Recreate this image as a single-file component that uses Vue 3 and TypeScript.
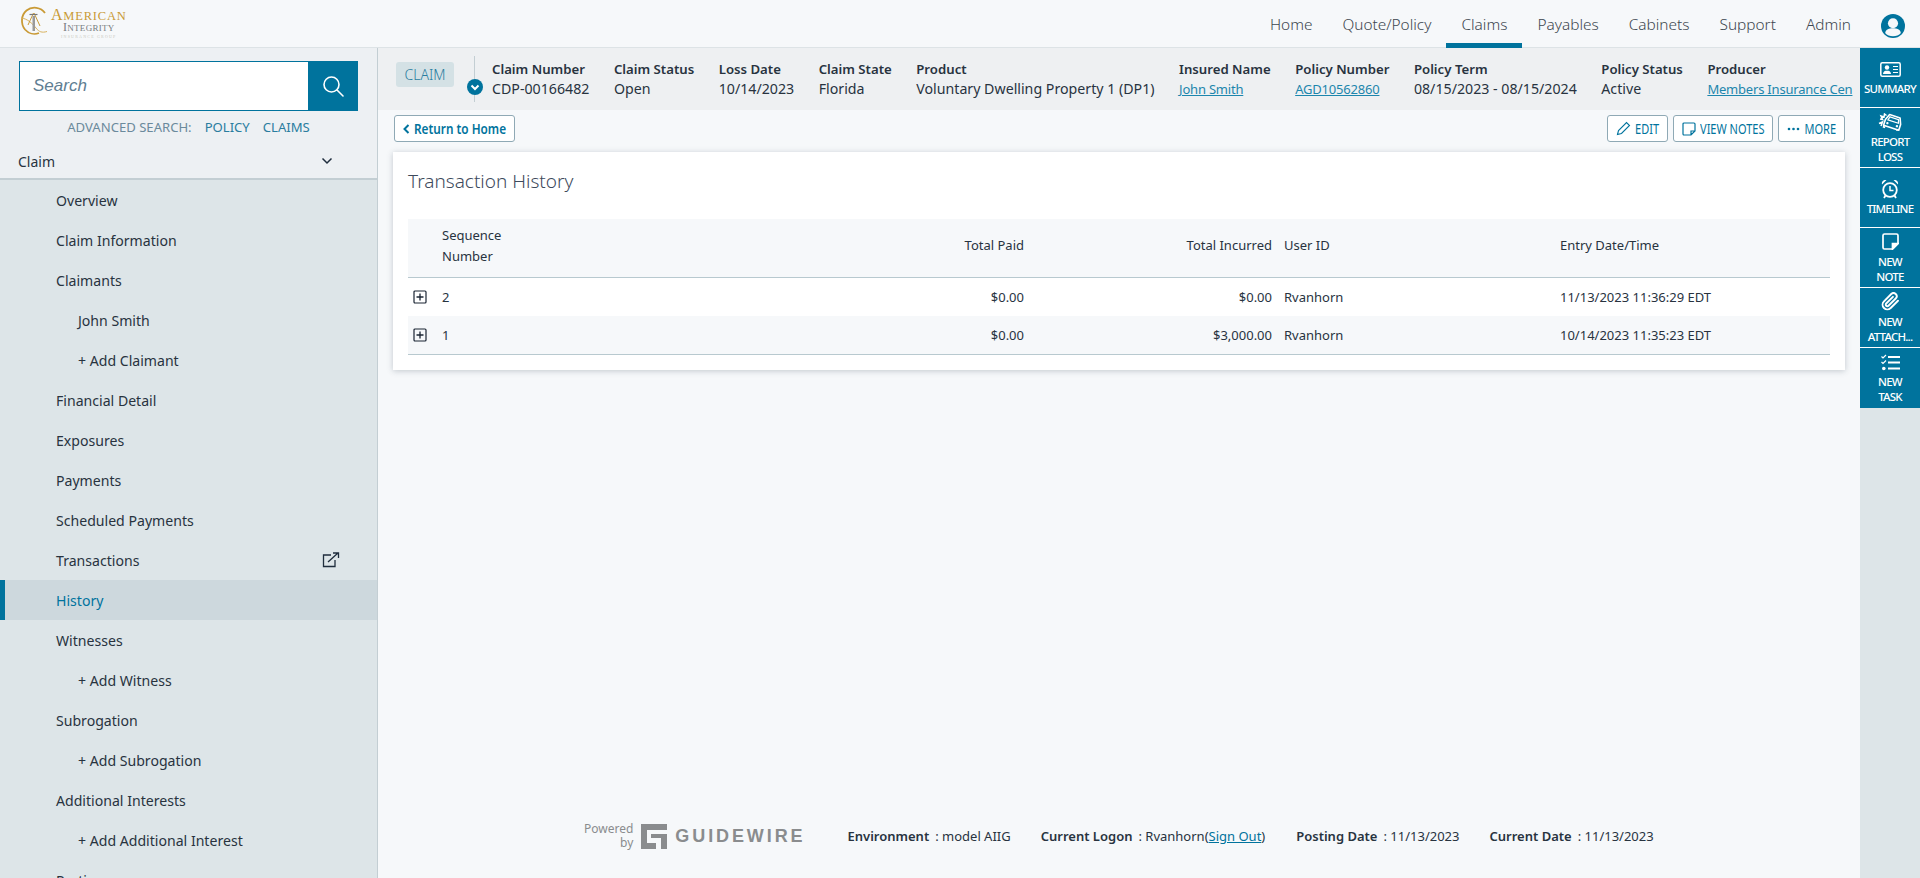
<template>
  <div class="page">
    <header class="topbar">
      <div class="logo">
        <svg class="logo__mark" width="30" height="30" viewBox="0 0 30 30" fill="none">
          <path d="M25 7C21 1 12 0 6.500 4.500 1 9 .5 18 5 23.500c3.500 4 9 5.500 14 3.500" stroke="#c99a35" stroke-width="1.800" />
          <path d="M1 12c6 .5 11 5 15 10 3 4 6 5 11 3.500" stroke="#d9b25e" stroke-width="1" />
          <path d="M13.500 7 8 19M14 7l6 13" stroke="#c99a35" stroke-width="1" />
          <rect x="12.500" y="10" width="2.500" height="15" fill="#9a9a9a" />
          <path d="M9.500 8.500h8" stroke="#777" stroke-width="1.200" />
        </svg>
        <div class="logo__words">
          <div class="logo__american"><span>A</span>MERICAN</div>
          <div class="logo__integrity"><span>I</span>NTEGRITY</div>
          <div class="logo__group">INSURANCE GROUP</div>
        </div>
      </div>
      <nav class="topnav">
        <a
          v-for="item in navItems"
          :key="item"
          class="topnav__item"
          :class="{ 'topnav__item--active': item === 'Claims' }"
        >{{ item }}</a>
        <svg class="topnav__user" width="24" height="24" viewBox="0 0 26 26">
          <circle cx="13" cy="13" r="13" fill="#00739d" />
          <circle cx="13" cy="10" r="5.500" fill="#f6f8fa" />
          <path d="M4.500 20.500c1-4 4-5 8.500-5s7.500 1 8.500 5c-2 2.500-5 3.500-8.500 3.500s-6.500-1-8.500-3.500z" fill="#f6f8fa" />
        </svg>
      </nav>
    </header>

    <div class="body">
      <aside class="sidebar">
        <div class="search">
          <div class="search__input">Search</div>
          <div class="search__btn">
            <svg width="24" height="24" viewBox="0 0 24 24" fill="none" stroke="#fff" stroke-width="1.600">
              <circle cx="10.500" cy="10.500" r="7.500" />
              <path d="M16 16l6 6" stroke-linecap="round" />
            </svg>
          </div>
        </div>
        <div class="advanced">
          <span class="advanced__label">ADVANCED SEARCH:</span>
          <a>POLICY</a>
          <a>CLAIMS</a>
        </div>
        <div class="section-head">
          <span>Claim</span>
          <svg width="12" height="8" viewBox="0 0 12 8" fill="none" stroke="#1f2d3d" stroke-width="1.500">
            <path d="M1.500 1.500 6 6l4.500-4.500" />
          </svg>
        </div>
        <ul class="menu">
          <li
            v-for="row in menu"
            :key="row.label"
            class="menu__row"
            :class="{ 'menu__row--sub': row.sub, 'menu__row--active': row.active }"
          >
            <span>{{ row.label }}</span>
            <svg v-if="row.external" class="menu__ext" width="18" height="16" viewBox="0 0 18 16" fill="none" stroke="#1f2d3d" stroke-width="1.300">
              <path d="M9 3H1.500v11.500H13V8" />
              <path d="M6 10l10-9M11 1h5.500v5" />
            </svg>
          </li>
        </ul>
      </aside>

      <main class="main">
        <section class="claimbar">
          <span class="claimbar__tag">CLAIM</span>
          <div class="claimbar__divider">
            <svg class="claimbar__toggle" width="16" height="16" viewBox="0 0 16 16">
              <circle cx="8" cy="8" r="8" fill="#00739d" />
              <path d="M4.500 6.500 8 10l3.500-3.500" fill="none" stroke="#fff" stroke-width="2" />
            </svg>
          </div>
          <div class="claimbar__fields">
            <div v-for="f in fields" :key="f.label" class="field">
              <div class="field__label">{{ f.label }}</div>
              <a v-if="f.link" class="field__link">{{ f.value }}</a>
              <div v-else class="field__value">{{ f.value }}</div>
            </div>
          </div>
        </section>

        <div class="actions">
          <button class="btn btn--return">
            <svg width="7" height="10" viewBox="0 0 7 10" fill="none" stroke="#00739d" stroke-width="2"><path d="M5.500 1 1.500 5l4 4" /></svg>
            <span class="btn__text">Return to Home</span>
          </button>
          <div class="actions__right">
            <button class="btn btn--caps">
              <svg width="15" height="15" viewBox="0 0 15 15" fill="none" stroke="#00739d" stroke-width="1.100">
                <path d="M1.500 13.500 2.500 9.500 10.500 1.500l3 3-8 8z" />
              </svg>
              <span class="btn__text">EDIT</span>
            </button>
            <button class="btn btn--caps">
              <svg width="14" height="14" viewBox="0 0 14 14" fill="none" stroke="#00739d" stroke-width="1.200">
                <path d="M9 13H2a1 1 0 0 1-1-1V2a1 1 0 0 1 1-1h10a1 1 0 0 1 1 1v7zM9 13V9h4" />
              </svg>
              <span class="btn__text">VIEW NOTES</span>
            </button>
            <button class="btn btn--caps">
              <svg width="13" height="4" viewBox="0 0 13 4" fill="#00739d">
                <circle cx="2" cy="2" r="1.300" /><circle cx="6.500" cy="2" r="1.300" /><circle cx="11" cy="2" r="1.300" />
              </svg>
              <span class="btn__text">MORE</span>
            </button>
          </div>
        </div>

        <section class="card">
          <h1 class="card__title">Transaction History</h1>
          <table class="history">
            <thead>
              <tr>
                <th class="col-toggle"></th>
                <th class="col-seq">Sequence<br />Number</th>
                <th class="col-paid num">Total Paid</th>
                <th class="col-inc num">Total Incurred</th>
                <th class="col-user">User ID</th>
                <th class="col-date">Entry Date/Time</th>
              </tr>
            </thead>
            <tbody>
              <tr v-for="tx in transactions" :key="tx.seq">
                <td class="col-toggle">
                  <svg width="14" height="14" viewBox="0 0 14 14" fill="none" stroke="#1a2433" stroke-width="1.200">
                    <rect x="1" y="1" width="12" height="12" rx="1" />
                    <path d="M3.500 7h7M7 3.500v7" stroke-width="1.300" />
                  </svg>
                </td>
                <td>{{ tx.seq }}</td>
                <td class="num">{{ tx.paid }}</td>
                <td class="num">{{ tx.incurred }}</td>
                <td class="cell-user">{{ tx.user }}</td>
                <td class="cell-date">{{ tx.date }}</td>
              </tr>
            </tbody>
          </table>
        </section>

        <footer class="footer">
          <div class="powered">
            <div class="powered__by">Powered<br />by</div>
            <svg width="26" height="25" viewBox="0 0 26 25" fill="#8a8c8e">
              <path d="M0 0h26v6H6v13h9v6H0zM10 10h16v15h-6V14H10z" />
            </svg>
            <span class="powered__name">GUIDEWIRE</span>
          </div>
          <div class="footer__item"><b>Environment</b><span>: model AIIG</span></div>
          <div class="footer__item"><b>Current Logon</b><span>: Rvanhorn(<a>Sign Out</a>)</span></div>
          <div class="footer__item"><b>Posting Date</b><span>: 11/13/2023</span></div>
          <div class="footer__item"><b>Current Date</b><span>: 11/13/2023</span></div>
        </footer>
      </main>

      <aside class="rail">
        <div class="rail__tile">
          <div class="rail__icon">
            <svg width="21" height="15" viewBox="0 0 21 15" fill="none" stroke="#fff" stroke-width="1.500">
              <rect x=".8" y=".8" width="19.400" height="13.400" rx="1.500" />
              <circle cx="7" cy="5.500" r="2.200" fill="#fff" stroke="none" />
              <path d="M3 12c.4-3 2-3.300 4-3.300s3.600.3 4 3.300z" fill="#fff" stroke="none" />
              <path d="M13 4.500h5M13 7.500h5M13 10.500h5" stroke-width="1.200" />
            </svg>
          </div>
          <span>SUMMARY</span>
        </div>
        <div class="rail__tile">
          <div class="rail__icon">
            <svg width="24" height="18" viewBox="0 0 24 18" fill="none" stroke="#fff" stroke-width="1.600">
              <g transform="rotate(18 15 9)">
                <path d="M7 9l2.500-6h11L23 9v6H7z" stroke-linejoin="round" />
                <path d="M10.500 5h9l1 3.500h-11z" stroke-width="1.200" />
                <circle cx="10" cy="11.800" r="1.200" fill="#fff" stroke="none" />
                <circle cx="20" cy="11.800" r="1.200" fill="#fff" stroke="none" />
                <path d="M8 15.500v2M22 15.500v2" stroke-width="2.400" />
              </g>
              <path d="M2 6l2.500.5L3 3l3 1 .5-3 2 1.500M1 10.500l3.500-1.500L3 13" stroke-width="1.500" />
            </svg>
          </div>
          <span>REPORT<br />LOSS</span>
        </div>
        <div class="rail__tile">
          <div class="rail__icon">
            <svg width="18" height="20" viewBox="0 0 18 20" fill="none" stroke="#fff" stroke-width="1.800">
              <circle cx="9" cy="11" r="6.800" />
              <path d="M9 7v4.500h3.500" stroke-width="1.500" />
              <path d="M1 5.500C.300 2.500 2.500.5 5.500 1zM17 5.500C17.700 2.500 15.500.5 12.500 1z" fill="#fff" stroke="none" />
              <path d="M4.500 16.500 3 19M13.500 16.500 15 19" />
            </svg>
          </div>
          <span>TIMELINE</span>
        </div>
        <div class="rail__tile">
          <div class="rail__icon">
            <svg width="17" height="17" viewBox="0 0 17 17" fill="none" stroke="#fff" stroke-width="1.700">
              <path d="M10.500 16H2.500A1.500 1.500 0 0 1 1 14.500V2.500A1.500 1.500 0 0 1 2.500 1h12A1.500 1.500 0 0 1 16 2.500v8z" />
              <path d="M10.500 16v-5.500H16z" fill="#fff" />
            </svg>
          </div>
          <span>NEW<br />NOTE</span>
        </div>
        <div class="rail__tile">
          <div class="rail__icon">
            <svg width="19" height="19" viewBox="0 0 24 24" fill="none" stroke="#fff" stroke-width="2.400" stroke-linecap="round" stroke-linejoin="round">
              <path d="M21.440 11.050l-9.190 9.190a6 6 0 0 1-8.490-8.490l9.190-9.190a4 4 0 0 1 5.660 5.660l-9.200 9.190a2 2 0 0 1-2.830-2.830l8.490-8.480" />
            </svg>
          </div>
          <span>NEW<br />ATTACH...</span>
        </div>
        <div class="rail__tile">
          <div class="rail__icon">
            <svg width="19" height="17" viewBox="0 0 19 17" fill="none" stroke="#fff" stroke-width="1.800">
              <path d="M7 3h12M7 8.500h12M7 14.500h12" />
              <path d="M.5 2.500 2 4 5 1M.5 8 2 9.500 5 6.500" stroke-width="1.200" />
              <circle cx="2.800" cy="14.500" r="1.800" fill="#fff" stroke="none" />
            </svg>
          </div>
          <span>NEW<br />TASK</span>
        </div>
      </aside>
    </div>
  </div>
</template>

<script setup lang="ts">
type MenuRow = {
  label: string
  sub?: boolean
  active?: boolean
  external?: boolean
}

const navItems = ['Home', 'Quote/Policy', 'Claims', 'Payables', 'Cabinets', 'Support', 'Admin']

const menu: MenuRow[] = [
  { label: 'Overview' },
  { label: 'Claim Information' },
  { label: 'Claimants' },
  { label: 'John Smith', sub: true },
  { label: '+ Add Claimant', sub: true },
  { label: 'Financial Detail' },
  { label: 'Exposures' },
  { label: 'Payments' },
  { label: 'Scheduled Payments' },
  { label: 'Transactions', external: true },
  { label: 'History', active: true },
  { label: 'Witnesses' },
  { label: '+ Add Witness', sub: true },
  { label: 'Subrogation' },
  { label: '+ Add Subrogation', sub: true },
  { label: 'Additional Interests' },
  { label: '+ Add Additional Interest', sub: true },
  { label: 'Parties' }
]

const fields = [
  { label: 'Claim Number', value: 'CDP-00166482' },
  { label: 'Claim Status', value: 'Open' },
  { label: 'Loss Date', value: '10/14/2023' },
  { label: 'Claim State', value: 'Florida' },
  { label: 'Product', value: 'Voluntary Dwelling Property 1 (DP1)' },
  { label: 'Insured Name', value: 'John Smith', link: true },
  { label: 'Policy Number', value: 'AGD10562860', link: true },
  { label: 'Policy Term', value: '08/15/2023 - 08/15/2024' },
  { label: 'Policy Status', value: 'Active' },
  { label: 'Producer', value: 'Members Insurance Cen', link: true }
]

const transactions = [
  { seq: 2, paid: '$0.00', incurred: '$0.00', user: 'Rvanhorn', date: '11/13/2023 11:36:29 EDT' },
  { seq: 1, paid: '$0.00', incurred: '$3,000.00', user: 'Rvanhorn', date: '10/14/2023 11:35:23 EDT' }
]
</script>

<style>
html,
body {
  margin: 0;
  overflow: hidden;
}
</style>

<style scoped>
.page {
  height: 878px;
  display: flex;
  flex-direction: column;
  overflow: hidden;
  background: #f6f8fa;
  color: #28333f;
  font-family: "Noto Sans", "Liberation Sans", sans-serif;
  font-size: 14px;
}

/* Top bar */
.topbar {
  flex: 0 0 48px;
  box-sizing: border-box;
  display: flex;
  align-items: stretch;
  justify-content: space-between;
  border-bottom: 1px solid #dde3e6;
}

.logo {
  display: flex;
  align-items: flex-start;
  gap: 1px;
  padding: 6px 0 0 20px;
}

.logo__words {
  text-align: center;
  font-family: "Liberation Serif", serif;
  line-height: 1;
}

.logo__american {
  color: #c99a35;
  font-size: 12.500px;
  letter-spacing: 0.8px;
  margin-top: 1px;
}

.logo__american span {
  font-size: 16px;
}

.logo__integrity {
  color: #777c80;
  font-size: 9px;
  letter-spacing: 0.3px;
  margin-top: -2px;
}

.logo__integrity span {
  font-size: 12px;
}

.logo__group {
  color: #c9c9c0;
  font-size: 4px;
  letter-spacing: 1.200px;
  margin-top: 2px;
}

.topnav {
  display: flex;
  align-items: stretch;
  padding-right: 15px;
}

.topnav__item {
  display: flex;
  align-items: center;
  padding: 5px 15px 0;
  margin-bottom: -1px;
  font-size: 15.400px;
  font-weight: 300;
  color: #3d4750;
  border-bottom: 5px solid transparent;
  box-sizing: border-box;
}

.topnav__item--active {
  border-bottom-color: #00739d;
}

.topnav__user {
  align-self: center;
  margin-left: 15px;
  margin-top: 4px;
}

/* Layout */
.body {
  flex: 1;
  min-height: 0;
  display: flex;
}

/* Sidebar */
.sidebar {
  flex: 0 0 378px;
  box-sizing: border-box;
  height: 830px;
  overflow: hidden;
  background: #edf0f3;
  border-right: 1px solid #c3ced3;
}

.search {
  display: flex;
  height: 50px;
  margin: 13px 19px 0;
}

.search__input {
  flex: 1;
  box-sizing: border-box;
  padding-left: 13px;
  display: flex;
  align-items: center;
  background: #fff;
  border: 1px solid #00739d;
  border-right: 0;
  color: #5f7e92;
  font-family: "Liberation Sans", sans-serif;
  font-style: italic;
  font-size: 17px;
}

.search__btn {
  flex: 0 0 50px;
  display: flex;
  align-items: center;
  justify-content: center;
  background: #00739d;
}

.advanced {
  display: flex;
  justify-content: center;
  gap: 13px;
  margin-top: 6px;
  font-size: 13.100px;
  line-height: 20px;
  color: #2a7d9f;
}

.advanced__label {
  color: #6b8a9c;
}

.section-head {
  height: 34px;
  margin-top: 7px;
  padding: 0 44px 0 18px;
  display: flex;
  align-items: center;
  justify-content: space-between;
  font-size: 14px;
  border-bottom: 2px solid #c3ced3;
}

.menu {
  list-style: none;
  margin: 0;
  padding: 0;
  background: #dde5e8;
}

.menu__row {
  height: 40px;
  box-sizing: border-box;
  display: flex;
  align-items: center;
  justify-content: space-between;
  padding: 0 37px 0 56px;
  font-size: 14.100px;
}

.menu__row--sub {
  padding-left: 78px;
}

.menu__row--active {
  background: #cdd8dd;
  color: #00739d;
  border-left: 5px solid #00739d;
  padding-left: 51px;
}

/* Main column */
.main {
  flex: 1;
  min-width: 0;
  display: flex;
  flex-direction: column;
}

.claimbar {
  height: 62px;
  flex: 0 0 62px;
  display: flex;
  background: #eef0f2;
  overflow: hidden;
}

.claimbar__tag {
  flex: 0 0 58px;
  align-self: flex-start;
  margin: 14px 0 0 18px;
  height: 25px;
  line-height: 25px;
  text-align: center;
  border-radius: 3px;
  background: #d4e1e5;
  color: #2a7d9f;
  font-weight: 300;
}

.claimbar__divider {
  position: relative;
  margin: 8px 0 0 20px;
  height: 46px;
  width: 1px;
  background: #c3ced3;
}

.claimbar__toggle {
  position: absolute;
  left: -7px;
  top: 23px;
}

.claimbar__fields {
  display: flex;
  gap: 24.500px;
  padding: 11px 0 0 17px;
  min-width: 0;
  flex: 1;
  white-space: nowrap;
  line-height: 20px;
}

.field {
  flex: 0 0 auto;
}

.field__label {
  font-weight: 600;
  font-size: 13.200px;
}

.field__value {
  font-size: 14.200px;
}

.field__link {
  font-size: 13px;
  letter-spacing: -0.2px;
  color: #1c86ad;
  text-decoration: underline;
}

.actions {
  display: flex;
  justify-content: space-between;
  padding: 5px 15px 0 16px;
}

.actions__right {
  display: flex;
  gap: 5px;
}

.btn {
  height: 27px;
  box-sizing: border-box;
  padding: 0 8px;
  display: inline-flex;
  align-items: center;
  gap: 4px;
  background: #fff;
  border: 1px solid #8fa9b5;
  border-radius: 3px;
  color: #00739d;
  font-family: inherit;
}

.btn__text {
  display: inline-block;
}

/* the reference uses a narrow cut of the face; squeeze it by scaling the height */
.btn--return .btn__text {
  margin-top: -2px;
  font-size: 11.800px;
  font-weight: 600;
  transform: scaleY(1.15);
}

.btn--caps .btn__text {
  font-size: 11px;
  transform: scaleY(1.25);
}

/* Card and table */
.card {
  margin: 10px 15px 0;
  padding: 0 15px 15px;
  box-sizing: border-box;
  background: #fff;
  box-shadow: 0 1px 6px rgba(40, 60, 75, 0.25);
}

.card__title {
  margin: 0;
  padding-top: 16px;
  height: 67px;
  box-sizing: border-box;
  font-size: 19px;
  line-height: 26px;
  font-weight: 300;
  color: #3d4a5c;
}

.history {
  width: 100%;
  border-collapse: collapse;
  table-layout: fixed;
  font-size: 13px;
}

.history th {
  height: 58px;
  padding: 0 0 4px;
  box-sizing: border-box;
  text-align: left;
  font-weight: 400;
  line-height: 21px;
  background: #f6f8fa;
  border-bottom: 1px solid #b8c9cf;
}

.history td {
  height: 38px;
  padding: 0;
}

.history tbody tr:nth-child(2) td {
  background: #f6f8fa;
  border-bottom: 1px solid #b8c9cf;
}

.history .num {
  text-align: right;
}

.col-toggle {
  width: 34px;
}

.history td.col-toggle svg {
  display: block;
  margin-left: 5px;
}

.col-seq {
  width: 200px;
}

.col-paid {
  width: 382px;
}

.col-inc {
  width: 248px;
}

.col-user {
  width: 287px;
}

.history th.col-user,
.history td.cell-user {
  padding-left: 12px;
}

.history th.col-date,
.history td.cell-date {
  padding-left: 1px;
}

/* Footer */
.footer {
  margin-top: auto;
  height: 84px;
  padding-left: 206px;
  box-sizing: border-box;
  display: flex;
  align-items: flex-start;
  gap: 30px;
  font-size: 13px;
}

.powered {
  display: flex;
  align-items: center;
  gap: 8px;
  margin-top: 28px;
  margin-right: 12px;
}

.powered__by {
  text-align: right;
  font-size: 12px;
  line-height: 14px;
  color: #8a8c8e;
}

.powered__name {
  font-size: 18px;
  font-weight: 700;
  letter-spacing: 2.900px;
  color: #8a8c8e;
  font-family: "Liberation Sans", sans-serif;
}

.footer__item {
  margin-top: 33px;
  display: flex;
  gap: 6px;
  line-height: 18px;
}

.footer__item:nth-child(3) {
  margin-right: 1px;
}

.footer__item b {
  font-weight: 600;
}

.footer__item a {
  color: #00739d;
  text-decoration: underline;
}

/* Right rail */
.rail {
  flex: 0 0 60px;
  height: 830px;
  background: #dde5e8;
  display: flex;
  flex-direction: column;
  align-self: flex-start;
}

.rail__tile {
  height: 60px;
  box-sizing: border-box;
  display: flex;
  flex-direction: column;
  align-items: center;
  justify-content: center;
  background: #00739d;
  border-bottom: 1px solid #fff;
  color: #fff;
  font-size: 11.500px;
  font-weight: 500;
  letter-spacing: -0.8px;
  line-height: 15px;
  text-align: center;
  white-space: nowrap;
}

.rail__icon {
  height: 20px;
  margin-bottom: 2px;
  display: flex;
  align-items: center;
  justify-content: center;
}

.rail__tile:last-child {
  border-bottom: 0;
}
</style>
